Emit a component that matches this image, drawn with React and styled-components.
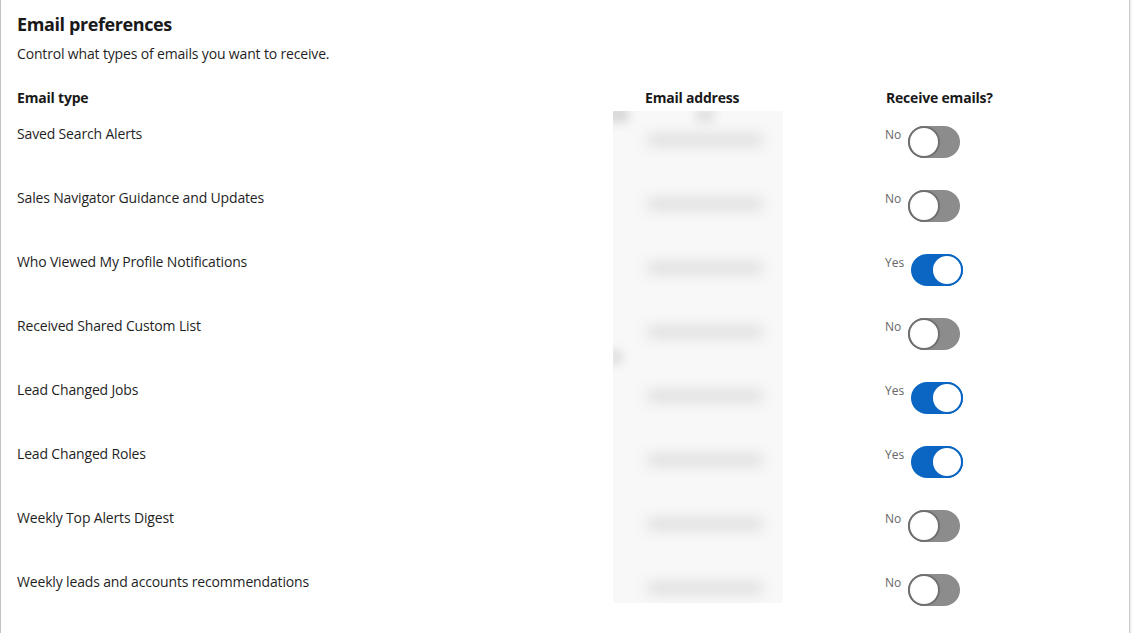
import React from "react";
import styled, { createGlobalStyle } from "styled-components";

const Global = createGlobalStyle`
  html, body { margin: 0; padding: 0; background: #f3f2ef; }
  body { font-family: "Open Sans", "Noto Sans", sans-serif; color: rgba(0,0,0,0.9); }
`;

const Card = styled.section`
  box-sizing: border-box;
  width: 1130px;
  height: 633px;
  overflow: hidden;
  background: #fff;
  border-left: 1px solid #c2c2c2;
  border-right: 1px solid #c8c8c8;
  padding: 12px 0 0 16px;
`;

const Title = styled.h2`
  margin: 0;
  font-size: 18px;
  line-height: 24px;
  font-weight: 700;
  letter-spacing: -0.4px;
  color: #191919;
`;

const Subtitle = styled.p`
  margin: 8px 0 0;
  font-size: 14px;
  line-height: 20px;
  letter-spacing: -0.16px;
  color: #1f1f1f;
`;

const Table = styled.div`
  display: grid;
  grid-template-columns: 596px 170px 1fr;
  grid-template-rows: 20px repeat(8, 64px);
  margin-top: 24px;
`;

const Head = styled.div`
  grid-row: 1;
  font-size: 14px;
  line-height: 20px;
  font-weight: 700;
  letter-spacing: -0.2px;
  color: #191919;
  padding-left: ${(p) => p.$indent || 0}px;
`;

const TypeCell = styled.div`
  grid-column: 1;
  grid-row: ${(p) => p.$row};
  font-size: 14px;
  line-height: 20px;
  letter-spacing: -0.16px;
  color: #1f1f1f;
  padding-top: 16px;
`;

const EmailBlock = styled.div`
  grid-column: 2;
  grid-row: 2 / span 8;
  margin-top: 3px;
  margin-bottom: 17px;
  background: #f8f8f8;
  position: relative;
  overflow: hidden;
  display: flex;
  flex-direction: column;
  gap: 54px;
  padding: 24px 20px 0 34px;
`;

const Smudge = styled.div`
  position: absolute;
  left: ${(p) => p.$x}px;
  top: ${(p) => p.$y}px;
  width: ${(p) => p.$w}px;
  height: ${(p) => p.$h}px;
  background: ${(p) => p.$c || "#dcdcdc"};
  filter: blur(${(p) => p.$b || 6}px);
  border-radius: 6px;
`;

const BlurLine = styled.div`
  flex: none;
  height: 10px;
  background: #d8d8d8;
  filter: blur(7px);
  border-radius: 5px;
`;

const ToggleCell = styled.div`
  grid-column: 3;
  grid-row: ${(p) => p.$row};
  display: flex;
  align-items: flex-start;
  padding-top: 17px;
  padding-left: 102px;
`;

const ToggleLabel = styled.span`
  font-size: 12px;
  line-height: 16px;
  color: #666;
  margin-right: 7px;
  margin-top: 2px;
`;

const Track = styled.span`
  display: inline-flex;
  box-sizing: border-box;
  width: 52px;
  height: 32px;
  border-radius: 16px;
  background: ${(p) => (p.$on ? "#0a66c2" : "#8c8c8c")};
  justify-content: ${(p) => (p.$on ? "flex-end" : "flex-start")};
  align-items: center;
  margin-top: 1px;
`;

const Knob = styled.span`
  box-sizing: border-box;
  width: 32px;
  height: 32px;
  border-radius: 50%;
  background: #fff;
  border: 2px solid ${(p) => (p.$on ? "#0a66c2" : "#6f6f6f")};
`;

const rows = [
  ["Saved Search Alerts", false],
  ["Sales Navigator Guidance and Updates", false],
  ["Who Viewed My Profile Notifications", true],
  ["Received Shared Custom List", false],
  ["Lead Changed Jobs", true],
  ["Lead Changed Roles", true],
  ["Weekly Top Alerts Digest", false],
  ["Weekly leads and accounts recommendations", false],
];

function Toggle({ on, row }) {
  return (
    <ToggleCell $row={row}>
      <ToggleLabel>{on ? "Yes" : "No"}</ToggleLabel>
      <Track $on={on} role="switch" aria-checked={on}>
        <Knob $on={on} />
      </Track>
    </ToggleCell>
  );
}

export default function App() {
  return (
    <>
      <Global />
      <Card>
        <Title>Email preferences</Title>
        <Subtitle>Control what types of emails you want to receive.</Subtitle>
        <Table>
          <Head>Email type</Head>
          <Head $indent={32}>Email address</Head>
          <Head $indent={103}>Receive emails?</Head>
          <EmailBlock>
            <Smudge $x={-6} $y={-6} $w={22} $h={18} $c="#d8d8d8" $b={5} />
            <Smudge $x={82} $y={-4} $w={20} $h={16} $c="#e2e2e2" $b={5} />
            <Smudge $x={-6} $y={238} $w={16} $h={16} $c="#e0e0e0" $b={5} />
            {rows.map(([label]) => (
              <BlurLine key={label} />
            ))}
          </EmailBlock>
          {rows.map(([label, on], i) => (
            <React.Fragment key={label}>
              <TypeCell $row={i + 2}>{label}</TypeCell>
              <Toggle on={on} row={i + 2} />
            </React.Fragment>
          ))}
        </Table>
      </Card>
    </>
  );
}
